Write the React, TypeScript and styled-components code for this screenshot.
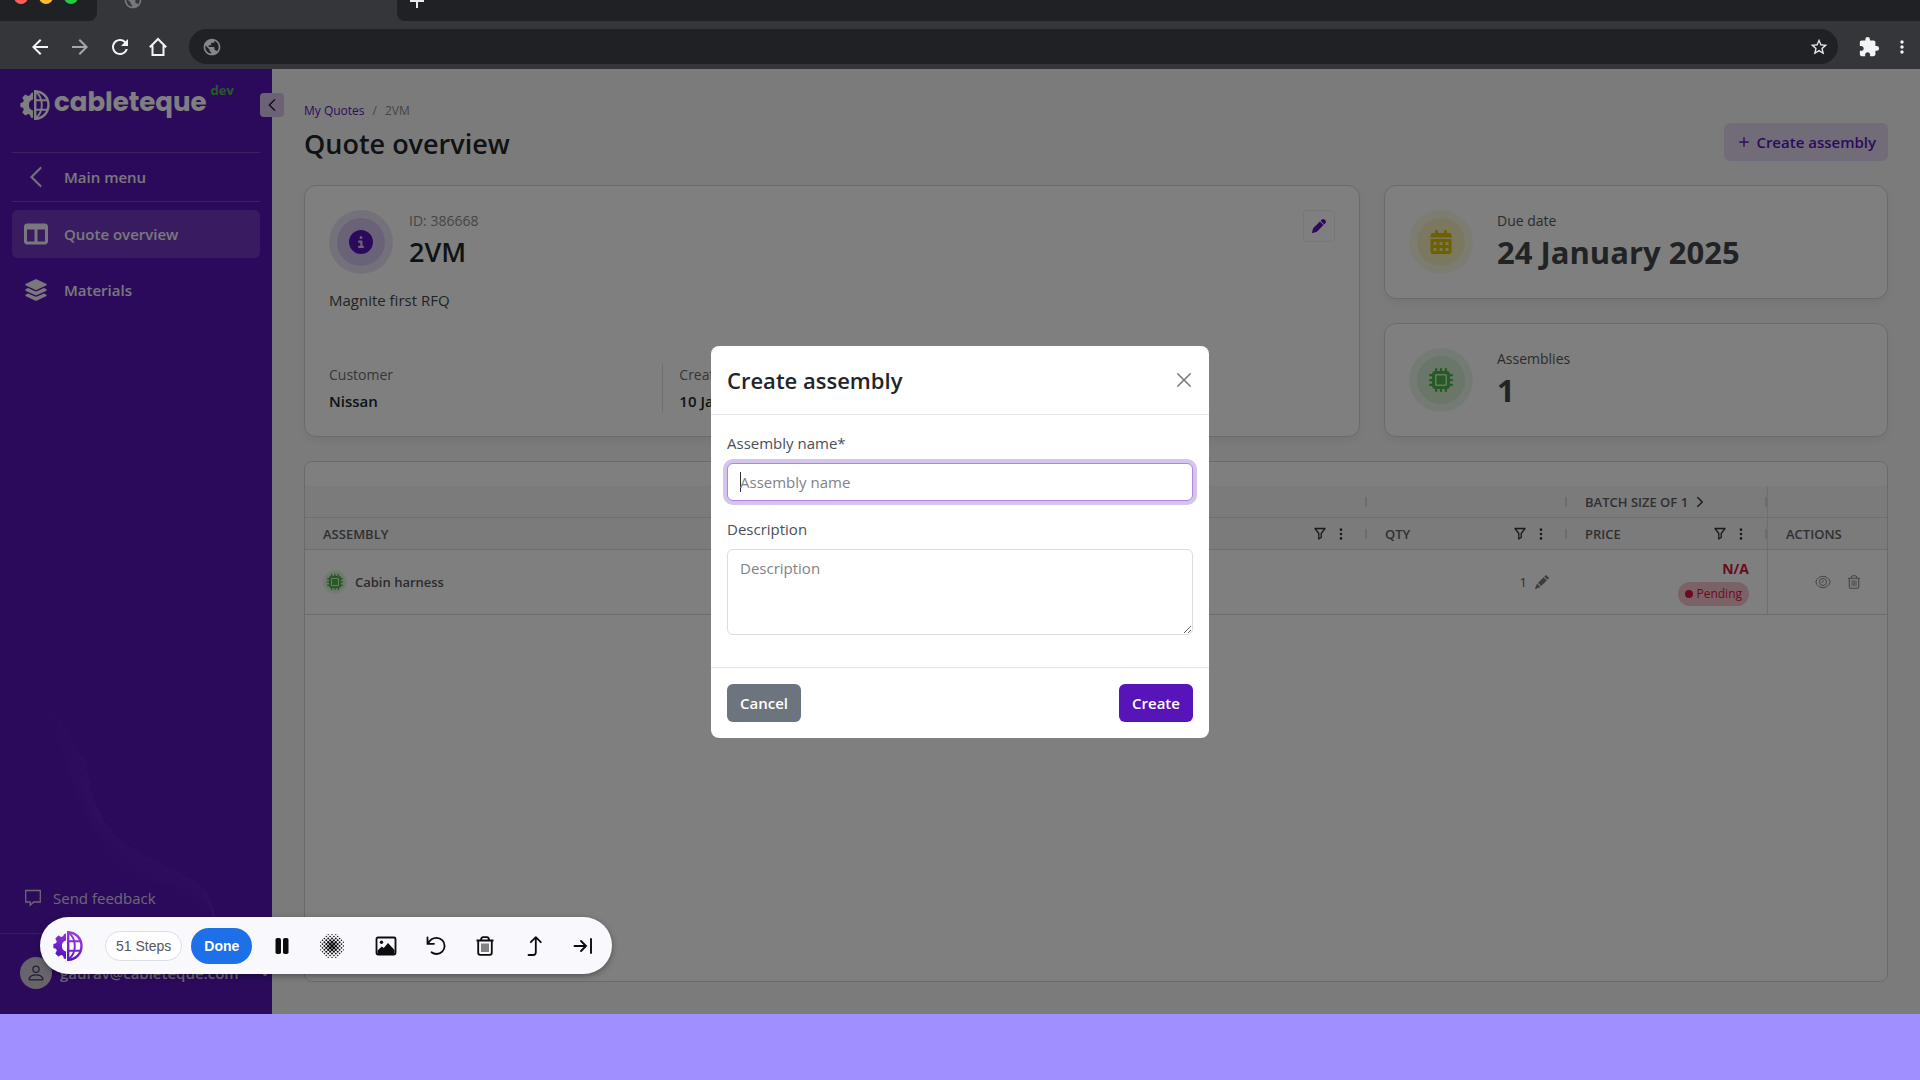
import React from "react";
import styled, { createGlobalStyle, css } from "styled-components";
import { MdArrowBack, MdArrowForward, MdRefresh, MdPublic, MdStarOutline, MdExtension, MdMoreVert, MdAdd } from "react-icons/md";
import { BsChevronLeft, BsChevronRight, BsChevronDown, BsPerson, BsPencilFill, BsXLg, BsThreeDotsVertical } from "react-icons/bs";
import { FaCircleInfo, FaTableColumns, FaLayerGroup, FaMicrochip, FaPen } from "react-icons/fa6";
import { FaCalendarAlt } from "react-icons/fa";

const color = {
  chromeDark: "#202124",
  chrome: "#35363a",
  purple: "#5715b9",
  purpleSoft: "#e2d9ef",
  page: "#f7f7f7",
  line: "#dfdfe3",
  text: "#212529",
  body: "#495057",
  muted: "#8a8a8e",
  green: "#4cb748",
  yellow: "#dcc400",
  red: "#d4143c",
};

const font = `"Segoe UI", "Open Sans", "Noto Sans", sans-serif`;

const GlobalStyle = createGlobalStyle`
  *, *::before, *::after { box-sizing: border-box; }
  body { margin: 0; font-family: ${font}; font-size: 15px; color: ${color.text}; }
  button, input, textarea { font-family: inherit; font-size: inherit; color: inherit; margin: 0; }
  button { border: 0; padding: 0; background: none; cursor: pointer; }
  h1, h2, p, dl, dd, ul { margin: 0; padding: 0; }
  svg { display: block; flex: none; }
  a { text-decoration: none; }
`;

const Screen = styled.div`
  display: flex;
  flex-direction: column;
  height: 100vh;
  background: #a08fff;
`;

/* ---------- browser chrome ---------- */

const TabStrip = styled.div`
  display: flex;
  flex: none;
  height: 21px;
  background: ${color.chrome};
  overflow: hidden;
`;

const StripZone = styled.div<{ $side?: "left" | "right" }>`
  display: flex;
  align-items: center;
  align-self: flex-end;
  flex: none;
  height: 42px;
  ${(p) =>
    p.$side === "left" &&
    css`
      width: 97px;
      padding: 0 0 6px 14px;
      gap: 11px;
      background: ${color.chromeDark};
      border-bottom-right-radius: 8px;
    `}
  ${(p) =>
    p.$side === "right" &&
    css`
      flex: 1;
      padding: 2px 0 0 8px;
      color: #e8eaed;
      background: ${color.chromeDark};
      border-bottom-left-radius: 8px;
    `}
  ${(p) =>
    !p.$side &&
    css`
      width: 300px;
      padding-left: 26px;
      color: #75777b;
    `}
`;

const Light = styled.span<{ $tone: string }>`
  width: 14px;
  height: 14px;
  border-radius: 50%;
  background: ${(p) => p.$tone};
`;

const AddressBar = styled.div`
  display: flex;
  align-items: center;
  height: 48px;
  flex: none;
  padding: 3px 8px 0 28px;
  background: ${color.chrome};
`;

const ChromeButton = styled.button<{ $dim?: boolean }>`
  display: grid;
  place-items: center;
  width: 20px;
  height: 36px;
  margin-right: 20px;
  color: ${(p) => (p.$dim ? "#a5a7ab" : "#f1f3f4")};
`;

const Omnibox = styled.div`
  flex: 1;
  display: flex;
  align-items: center;
  justify-content: space-between;
  height: 35px;
  margin: 0 20px 0 1px;
  padding: 0 9px 0 13px;
  border-radius: 18px;
  background: ${color.chromeDark};
  color: #85878b;
`;

const ChromeActions = styled.div`
  display: flex;
  align-items: center;
  gap: 12px;
  color: #f1f3f4;
`;

const PlainButton = styled.button`
  display: grid;
  place-items: center;
  color: inherit;
`;

/* ---------- application shell ---------- */

const Viewport = styled.div`
  position: relative;
  flex: 1;
  display: flex;
  min-height: 0;
  margin-bottom: 66px;
  background: ${color.page};
`;

const Sidebar = styled.aside`
  position: relative;
  display: flex;
  flex-direction: column;
  flex: none;
  width: 272px;
  background: ${color.purple};
  color: #f4f0fa;
`;

const Mesh = styled.svg`
  position: absolute;
  left: 0;
  bottom: 0;
  opacity: 0.12;
`;

const Brand = styled.div`
  display: flex;
  height: 83px;
  padding: 20px 0 0 20px;
  color: #fff;
`;

const BrandName = styled.span`
  margin-left: 4px;
  font-family: Poppins, Inter, sans-serif;
  font-size: 26px;
  line-height: 26px;
  font-weight: 700;
`;

const EnvTag = styled.span`
  margin-left: 4px;
  font-size: 13px;
  line-height: 2px;
  font-weight: 700;
  color: ${color.green};
`;

const CollapseButton = styled.button`
  position: absolute;
  top: 24px;
  right: -12px;
  display: grid;
  place-items: center;
  width: 24px;
  height: 24px;
  border-radius: 4px;
  background: #d6c5ec;
  color: ${color.text};
`;

const Nav = styled.nav`
  position: relative;
  display: flex;
  flex-direction: column;
  gap: 8px;
  margin: 0 12px;
`;

const NavLink = styled.a<{ $active?: boolean; $ruled?: boolean }>`
  display: flex;
  align-items: center;
  gap: 16px;
  height: ${(p) => (p.$ruled ? "50px" : "48px")};
  padding: 0 12px;
  border-radius: ${(p) => (p.$ruled ? "0" : "6px")};
  color: inherit;
  font-weight: 600;
  background: ${(p) => (p.$active ? "rgba(255, 255, 255, 0.15)" : "transparent")};
  ${(p) =>
    p.$ruled &&
    css`
      border: solid rgba(255, 255, 255, 0.2);
      border-width: 1px 0;
    `}
`;

const SidebarFoot = styled.div`
  position: relative;
  margin-top: auto;
`;

const Feedback = styled.a`
  display: flex;
  align-items: center;
  gap: 12px;
  height: 68px;
  padding: 0 0 4px 25px;
  border-bottom: 1px solid rgba(255, 255, 255, 0.15);
  color: #d9d0e6;
`;

const Profile = styled.button`
  display: flex;
  align-items: center;
  gap: 8px;
  width: 100%;
  height: 80px;
  padding: 0 0 2px 20px;
  color: #d9d0e6;
  font-weight: 600;

  > svg { margin-left: auto; }
`;

const Avatar = styled.span`
  display: grid;
  place-items: center;
  width: 32px;
  height: 32px;
  border-radius: 50%;
  background: #d0c9d8;
  color: #4a3a66;
`;

const Main = styled.main`
  flex: 1;
  display: flex;
  flex-direction: column;
  gap: 24px;
  min-width: 0;
  padding: 32px;
`;

const PageHeader = styled.header`
  display: flex;
  align-items: flex-end;
  justify-content: space-between;
`;

const Crumbs = styled.nav`
  display: flex;
  gap: 8px;
  margin-bottom: 6px;
  font-size: 12px;
  line-height: 20px;
  color: ${color.muted};

  a { color: ${color.purple}; }
`;

const Title = styled.h1`
  font-size: 27px;
  line-height: 34px;
  font-weight: 600;
`;

const Button = styled.button<{ $tone: "soft" | "grey" | "primary" }>`
  display: flex;
  align-items: center;
  justify-content: center;
  gap: 4px;
  min-width: 74px;
  height: 38px;
  padding: 0 12px;
  border-radius: 6px;
  font-weight: 600;
  background: ${(p) => ({ soft: color.purpleSoft, grey: "#6c757d", primary: color.purple })[p.$tone]};
  color: ${(p) => (p.$tone === "soft" ? color.purple : "#fff")};
`;

const Summary = styled.section`
  display: grid;
  grid-template-columns: 44fr 21fr;
  gap: 24px;
`;

const Card = styled.div`
  display: flex;
  flex-direction: column;
  padding: 24px;
  border: 1px solid #d4d4d8;
  border-radius: 12px;
  background: #fff;
  box-shadow: 0 4px 8px rgba(0, 0, 0, 0.06);
`;

const Stack = styled.div`
  display: grid;
  gap: 24px;
`;

const CardTop = styled.div<{ $gap: number }>`
  display: flex;
  align-items: center;
  gap: ${(p) => p.$gap}px;
`;

const CardHeading = styled.div`
  padding-bottom: 4px;
`;

const Halo = styled.span<{ $tint: string; $color: string; $small?: boolean }>`
  display: grid;
  place-items: center;
  flex: none;
  width: ${(p) => (p.$small ? 24 : 64)}px;
  height: ${(p) => (p.$small ? 24 : 64)}px;
  border: ${(p) => (p.$small ? 2 : 8)}px solid rgba(${(p) => p.$tint}, 0.12);
  border-radius: 50%;
  background: rgba(${(p) => p.$tint}, ${(p) => (p.$small ? 0.2 : 0.25)});
  background-clip: padding-box;
  color: ${(p) => p.$color};
`;

const Label = styled.div<{ $muted?: boolean }>`
  font-size: 14px;
  line-height: 20px;
  color: ${(p) => (p.$muted ? color.muted : "#55585c")};
`;

const QuoteName = styled.h2`
  margin-top: 4px;
  font-size: 27px;
  line-height: 34px;
  font-weight: 600;
`;

const Figure = styled.div`
  margin-top: 4px;
  font-size: 31px;
  line-height: 34px;
  font-weight: 700;
  color: #44464a;
`;

const EditButton = styled.button`
  display: grid;
  place-items: center;
  align-self: flex-start;
  width: 32px;
  height: 32px;
  margin-left: auto;
  border: 1px solid #ececf0;
  border-radius: 4px;
  color: ${color.purple};
`;

const Note = styled.p`
  margin-top: 16px;
  line-height: 20px;
  color: #44474b;
`;

const Facts = styled.dl`
  display: grid;
  grid-template-columns: repeat(3, 1fr);
  margin-top: auto;
  padding-right: 6px;
`;

const Fact = styled.div`
  line-height: 22px;

  & + & {
    padding-left: 16px;
    border-left: 1px solid ${color.line};
  }
  dt { margin-bottom: 4px; font-size: 14px; color: #6c6e72; }
  dd { font-weight: 600; font-size: 15px; }
`;

/* ---------- assemblies table ---------- */

const TableCard = styled.section`
  flex: 1;
  min-height: 0;
  padding-top: 24px;
  border: 1px solid #d4d4d8;
  border-radius: 8px;
  background: #fff;
`;

const Table = styled.table`
  width: 100%;
  table-layout: fixed;
  border-collapse: separate;
  border-spacing: 0;

  tr > :last-child { border-left: 1px solid ${color.line}; }
`;

const Col = styled.col<{ $width?: number }>`
  width: ${(p) => (p.$width ? `${p.$width}px` : "auto")};
`;

const Th = styled.th`
  height: 32px;
  padding: 0 0 0 18px;
  border-bottom: 1px solid ${color.line};
  background: #f6f6f7;
  font-size: 13px;
  font-weight: 600;
  text-align: left;
  white-space: nowrap;
  color: #5f6165;
`;

const HeadCell = styled.div<{ $tick?: boolean }>`
  display: flex;
  align-items: center;
  gap: 6px;
  height: 10px;
  border-right: ${(p) => (p.$tick ? "2px solid #d6d6e0" : "0")};
`;

const HeadTools = styled.span`
  display: flex;
  align-items: center;
  gap: 8px;
  margin-left: auto;
  margin-right: 17px;
  color: #333;
`;

const Td = styled.td<{ $pad?: number }>`
  height: 65px;
  padding: 0 ${(p) => p.$pad ?? 18}px 0 18px;
  border-bottom: 1px solid #d9d9e4;
`;

const Cell = styled.div<{ $end?: boolean; $gap?: number; $faint?: boolean }>`
  display: flex;
  align-items: center;
  justify-content: ${(p) => (p.$end ? "flex-end" : "flex-start")};
  gap: ${(p) => p.$gap ?? 8}px;
  font-size: 13px;
  font-weight: ${(p) => (p.$end ? 400 : 600)};
  color: ${(p) => (p.$faint ? "#85878b" : "#55585c")};
`;

const Price = styled.div`
  display: flex;
  flex-direction: column;
  align-items: flex-end;
  gap: 2px;
  font-size: 14px;
  line-height: 22px;
  font-weight: 700;
  color: ${color.red};
`;

const Pill = styled.span`
  display: flex;
  align-items: center;
  gap: 3px;
  height: 24px;
  padding: 0 7px;
  border-radius: 12px;
  background: #f6c4cf;
  font-size: 12px;
  font-weight: 400;

  &::before {
    content: "";
    width: 8px;
    height: 8px;
    border-radius: 50%;
    background: ${color.red};
  }
`;

/* ---------- dialog ---------- */

const Backdrop = styled.div`
  position: absolute;
  inset: 0;
  display: flex;
  align-items: center;
  justify-content: center;
  background: rgba(0, 0, 0, 0.5);
`;

const Dialog = styled.form`
  width: 498px;
  border-radius: 8px;
  background: #fff;
`;

const DialogHeader = styled.header`
  display: flex;
  align-items: center;
  justify-content: space-between;
  padding: 16px;
  border-bottom: 1px solid #e6e6ea;

  h2 { font-size: 22px; line-height: 36px; font-weight: 600; }
`;

const DialogBody = styled.div`
  display: flex;
  flex-direction: column;
  padding: 16px 16px 32px;
`;

const FieldLabel = styled.label`
  margin-bottom: 8px;
  line-height: 24px;
  color: ${color.body};
`;

const control = css`
  display: block;
  width: 100%;
  padding: 6px 12px;
  border: 1px solid #dcdde1;
  border-radius: 6px;
  outline: none;
  line-height: 24px;
  &::placeholder { color: #7f8286; opacity: 1; }
`;

/* The focused field shows a resting text caret before its placeholder. */
const NameInput = styled.input`
  ${control}
  height: 38px;
  margin-bottom: 16px;
  border-color: #ab8adc;
  box-shadow: 0 0 0 4px rgba(87, 21, 185, 0.25);
  background: linear-gradient(#333, #333) 12px center / 1px 20px no-repeat #fff;
`;

const DescriptionInput = styled.textarea`
  ${control}
  height: 86px;
  resize: vertical;
`;

const DialogFooter = styled.footer`
  display: flex;
  justify-content: space-between;
  padding: 16px;
  border-top: 1px solid #e6e6ea;
`;

/* ---------- recorder bar ---------- */

const Recorder = styled.div`
  position: absolute;
  left: 40px;
  bottom: 40px;
  display: flex;
  align-items: center;
  height: 57px;
  padding: 0 19px 0 13px;
  border-radius: 29px;
  background: #f9f9fd;
  box-shadow: 0 2px 6px rgba(0, 0, 0, 0.35);
  color: #0c0c0e;
  font-family: Arial, "Liberation Sans", sans-serif;
`;

const Steps = styled.span`
  height: 30px;
  margin: 0 9px 0 22px;
  padding: 0 10px;
  border: 1px solid #dddde4;
  border-radius: 15px;
  background: #fff;
  font-size: 14px;
  line-height: 28px;
  color: #55565f;
`;

const Done = styled.button`
  height: 36px;
  margin-right: 23px;
  padding: 0 13px;
  border-radius: 18px;
  background: #1d70e8;
  color: #fff;
  font-size: 14px;
  font-weight: 700;
`;

const Tools = styled.div`
  display: flex;
  align-items: center;
  gap: 29px;
`;

/* ---------- drawings ---------- */

const Logo = ({ gradient }: { gradient?: boolean }) => {
  const paint = gradient ? "url(#brandFade)" : "currentColor";
  return (
    <svg width="30" height="32" viewBox="0 0 30 32">
      {gradient && (
        <defs>
          <linearGradient id="brandFade" gradientUnits="userSpaceOnUse" x1="22" y1="0" x2="8" y2="32">
            <stop offset="0" stopColor="#a03ee0" />
            <stop offset="1" stopColor="#4a10b4" />
          </linearGradient>
        </defs>
      )}
      <path
        fill={paint}
        d="M13 3.200V10.600a5.600 5.600 0 0 0 0 10.800v7.400h-2l-1-3-1.800-.8-2.900 1.500-3-3 1.500-2.900-.8-1.800-2.600-.8v-4l2.600-.8.8-1.800-1.500-2.900 3-3 2.900 1.500 1.800-.8 1-2z"
      />
      <g fill="none" stroke={paint}>
        <path strokeWidth="2.400" d="M15.200 2.200V29.800C23 29.500 28.500 23.500 28.500 16S23 2.500 15.200 2.200Z" />
        <path strokeWidth="1.900" d="M15.500 2.800C20 6 21.800 11 21.800 16S20 26 15.500 29.200M15 11.300H27.500M15 20.700H27.500" />
      </g>
    </svg>
  );
};

const HomeIcon = () => (
  <svg width="20" height="20" viewBox="0 0 20 20" fill="none" stroke="currentColor" strokeWidth="2">
    <path d="M1.800 10.200L10 2l8.200 8.200M4.500 8.500V18h11V8.500" />
  </svg>
);

const ChatIcon = () => (
  <svg width="16" height="18" viewBox="0 0 16 18" fill="none" stroke="currentColor" strokeWidth="1.300">
    <path d="M.7 1.500h14.600v11.500H8.800L5.200 16.300V13H.7z" />
  </svg>
);

const FunnelIcon = () => (
  <svg width="12" height="13" viewBox="0 0 12 13" fill="none" stroke="currentColor" strokeWidth="1.300">
    <path d="M1 1.500h10L7.200 6.500v4L4.800 12V6.500z" strokeLinejoin="round" />
  </svg>
);

const EyeIcon = () => (
  <svg width="16" height="14" viewBox="0 0 16 14" fill="none" stroke="currentColor" strokeWidth="1">
    <path d="M.8 7C3-.6 13-.6 15.200 7 13 14.600 3 14.600.8 7z" />
    <circle cx="8" cy="7" r="3.500" />
    <path d="M6.600 7.500A1.500 1.500 0 0 0 8 5.200" />
  </svg>
);

const BinIcon = ({ size, stroke }: { size: number; stroke: number }) => (
  <svg width={size} height={size} viewBox="0 0 20 20" fill="none" stroke="currentColor" strokeWidth={stroke}>
    <path d="M1.500 4.500h17M6 4.200C6 2 7 1.200 8.200 1.200h3.600C13 1.200 14 2 14 4.200M3.200 4.500v12.300c0 1.300.7 2 2 2h9.600c1.300 0 2-.7 2-2V4.500" />
    <path d="M7 7.500v8.500M9 7.500v8.500M11 7.500v8.500M13 7.500v8.500" strokeWidth="1" />
  </svg>
);

const PauseIcon = () => (
  <svg width="14" height="16" viewBox="0 0 14 16" fill="currentColor">
    <rect x=".5" width="5.500" height="16" rx="1.800" />
    <rect x="8" width="5.500" height="16" rx="1.800" />
  </svg>
);

/* Halftone disc: dots shrink with distance from the centre. */
const BlurIcon = () => {
  const dots: React.ReactNode[] = [];
  for (let row = -6; row <= 6; row++) {
    for (let col = -6; col <= 6; col++) {
      const far = Math.hypot(row, col);
      if ((row + col) % 2 || far > 6.600) continue;
      dots.push(<circle key={`${row}:${col}`} cx={14 + col * 1.900} cy={14 + row * 1.900} r={1.650 - far * 0.160} />);
    }
  }
  return (
    <svg width="28" height="28" viewBox="0 0 28 28" fill="currentColor">
      {dots}
    </svg>
  );
};

const PictureIcon = () => (
  <svg width="22" height="20" viewBox="0 0 22 20">
    <rect x="1.500" y="1.500" width="19" height="17" rx="1.500" fill="none" stroke="currentColor" strokeWidth="1.800" />
    <circle cx="6.500" cy="6.300" r="1.700" fill="currentColor" />
    <path fill="currentColor" d="M2.500 18v-3.500l4.300-4 2 1.500 4.200-5 6.500 7V18z" />
  </svg>
);

const UndoIcon = () => (
  <svg width="20" height="20" viewBox="0 0 20 20" fill="none" stroke="currentColor" strokeWidth="1.800" strokeLinecap="round">
    <path d="M1.500 1.500v6.300H8M2 7.500C4 3.500 7 1.800 10.500 1.800a8 8 0 0 1 0 16.200c-2 0-3.700-.6-5-1.700" />
  </svg>
);

const TurnUpIcon = () => (
  <svg width="20" height="20" viewBox="-2 0 20 20" fill="none" stroke="currentColor" strokeWidth="1.800" strokeLinecap="round" strokeLinejoin="round">
    <path d="M2.500 19H7c1.800 0 2.800-1 2.800-2.800V1.200M4.800 6.200l5-5 5 5" />
  </svg>
);

const DockIcon = () => (
  <svg width="20" height="16" viewBox="0 0 20 16" fill="none" stroke="currentColor" strokeWidth="1.900" strokeLinecap="round">
    <path d="M1.500 8h11.500M8 3l5 5-5 5M18 1v14" />
  </svg>
);

const SidebarMesh = () => {
  const strands = Array.from({ length: 22 }, (_, i) => i);
  return (
    <Mesh width="272" height="460" viewBox="0 0 272 460" fill="none" stroke="#e6c8ff" aria-hidden="true">
      {strands.map((i) => (
        <path
          key={`b${i}`}
          strokeWidth="0.500"
          strokeOpacity="0.350"
          d={`M${-40 + i * 3} ${330 + i * 4}Q${30 + i * 4} ${290 + i * 2} ${90 + i * 5} ${190 + i * 6}`}
        />
      ))}
      {strands.slice(0, 9).map((i) => (
        <path
          key={`a${i}`}
          strokeWidth="1"
          strokeOpacity={0.600 - i * 0.060}
          d={`M${84 - i * 5} ${205 - i * 8}C${94 - i} ${270 + i} ${112 - i} ${288 + i * 2} ${160 - i * 3} ${311 + i}S${204 + i * 2} ${328 + i * 2} ${214 + i * 2} ${362 + i * 6}`}
        />
      ))}
    </Mesh>
  );
};

const Tooling = () => (
  <HeadTools>
    <PlainButton type="button" aria-label="Filter"><FunnelIcon /></PlainButton>
    <PlainButton type="button" aria-label="Column menu"><BsThreeDotsVertical size={14} /></PlainButton>
  </HeadTools>
);

export default function App() {
  return (
    <Screen>
      <GlobalStyle />
      <TabStrip>
        <StripZone $side="left">
          <Light $tone="#ff5f57" />
          <Light $tone="#febc2e" />
          <Light $tone="#28c840" />
        </StripZone>
        <StripZone><MdPublic size={20} /></StripZone>
        <StripZone $side="right">
          <PlainButton aria-label="New tab"><MdAdd size={24} /></PlainButton>
        </StripZone>
      </TabStrip>
      <AddressBar>
        <ChromeButton aria-label="Back"><MdArrowBack size={24} /></ChromeButton>
        <ChromeButton aria-label="Forward" $dim><MdArrowForward size={24} /></ChromeButton>
        <ChromeButton aria-label="Reload"><MdRefresh size={24} /></ChromeButton>
        <ChromeButton aria-label="Home"><HomeIcon /></ChromeButton>
        <Omnibox>
          <MdPublic size={20} />
          <MdStarOutline size={20} color="#e8eaed" />
        </Omnibox>
        <ChromeActions>
          <PlainButton aria-label="Extensions"><MdExtension size={22} /></PlainButton>
          <PlainButton aria-label="Menu"><MdMoreVert size={20} /></PlainButton>
        </ChromeActions>
      </AddressBar>

      <Viewport>
        <Sidebar>
          <SidebarMesh />
          <Brand>
            <Logo />
            <BrandName>cableteque</BrandName>
            <EnvTag>dev</EnvTag>
          </Brand>
          <Nav>
            <NavLink href="#menu" $ruled><BsChevronLeft size={24} strokeWidth={0.5} />Main menu</NavLink>
            <NavLink href="#overview" $active><FaTableColumns size={24} />Quote overview</NavLink>
            <NavLink href="#materials"><FaLayerGroup size={24} />Materials</NavLink>
          </Nav>
          <SidebarFoot>
            <Feedback href="#feedback"><ChatIcon />Send feedback</Feedback>
            <Profile type="button">
              <Avatar><BsPerson size={20} /></Avatar>
              gaurav@cableteque.com
              <BsChevronDown size={14} strokeWidth={1} />
            </Profile>
          </SidebarFoot>
          <CollapseButton aria-label="Collapse sidebar"><BsChevronLeft size={14} strokeWidth={1} /></CollapseButton>
        </Sidebar>

        <Main>
          <PageHeader>
            <div>
              <Crumbs aria-label="Breadcrumb">
                <a href="#quotes">My Quotes</a>
                <span>/</span>
                <span>2VM</span>
              </Crumbs>
              <Title>Quote overview</Title>
            </div>
            <Button type="button" $tone="soft"><MdAdd size={16} />Create assembly</Button>
          </PageHeader>

          <Summary>
            <Card>
              <CardTop $gap={16}>
                <Halo $tint="87, 21, 185" $color={color.purple}><FaCircleInfo size={24} /></Halo>
                <CardHeading>
                  <Label $muted>ID: 386668</Label>
                  <QuoteName>2VM</QuoteName>
                </CardHeading>
                <EditButton aria-label="Edit quote"><FaPen size={14} /></EditButton>
              </CardTop>
              <Note>Magnite first RFQ</Note>
              <Facts>
                <Fact><dt>Customer</dt><dd>Nissan</dd></Fact>
                <Fact><dt>Created</dt><dd>10 January 2025</dd></Fact>
              </Facts>
            </Card>
            <Stack>
              <Card>
                <CardTop $gap={24}>
                  <Halo $tint="225, 200, 0" $color={color.yellow}><FaCalendarAlt size={24} /></Halo>
                  <CardHeading>
                    <Label>Due date</Label>
                    <Figure>24 January 2025</Figure>
                  </CardHeading>
                </CardTop>
              </Card>
              <Card>
                <CardTop $gap={24}>
                  <Halo $tint="76, 183, 72" $color={color.green}><FaMicrochip size={24} /></Halo>
                  <CardHeading>
                    <Label>Assemblies</Label>
                    <Figure>1</Figure>
                  </CardHeading>
                </CardTop>
              </Card>
            </Stack>
          </Summary>

          <TableCard>
            <Table>
              <colgroup>
                <Col />
                <Col $width={200} />
                <Col $width={200} />
                <Col $width={120} />
              </colgroup>
              <thead>
                <tr>
                  <Th><HeadCell $tick /></Th>
                  <Th><HeadCell $tick /></Th>
                  <Th><HeadCell $tick>BATCH SIZE OF 1 <BsChevronRight size={12} color="#222" strokeWidth={1} /></HeadCell></Th>
                  <Th />
                </tr>
                <tr>
                  <Th scope="col"><HeadCell $tick>ASSEMBLY<Tooling /></HeadCell></Th>
                  <Th scope="col"><HeadCell $tick>QTY<Tooling /></HeadCell></Th>
                  <Th scope="col"><HeadCell $tick>PRICE<Tooling /></HeadCell></Th>
                  <Th scope="col"><HeadCell>ACTIONS</HeadCell></Th>
                </tr>
              </thead>
              <tbody>
                <tr>
                  <Td>
                    <Cell>
                      <Halo $small $tint="76, 183, 72" $color={color.green}><FaMicrochip size={16} /></Halo>
                      Cabin harness
                    </Cell>
                  </Td>
                  <Td>
                    <Cell $end>1<PlainButton aria-label="Edit quantity"><BsPencilFill size={14} color="#77797d" /></PlainButton></Cell>
                  </Td>
                  <Td><Price>N/A<Pill>Pending</Pill></Price></Td>
                  <Td $pad={26}>
                    <Cell $end $faint $gap={16}>
                      <PlainButton aria-label="View"><EyeIcon /></PlainButton>
                      <PlainButton aria-label="Delete"><BinIcon size={14} stroke={1.500} /></PlainButton>
                    </Cell>
                  </Td>
                </tr>
              </tbody>
            </Table>
          </TableCard>
        </Main>

        <Backdrop>
          <Dialog role="dialog" aria-labelledby="dialog-title" onSubmit={(e) => e.preventDefault()}>
            <DialogHeader>
              <h2 id="dialog-title">Create assembly</h2>
              <PlainButton type="button" aria-label="Close"><BsXLg size={18} color="#77797b" strokeWidth={0.5} /></PlainButton>
            </DialogHeader>
            <DialogBody>
              <FieldLabel htmlFor="assembly-name">Assembly name*</FieldLabel>
              <NameInput id="assembly-name" type="text" placeholder="Assembly name" />
              <FieldLabel htmlFor="assembly-description">Description</FieldLabel>
              <DescriptionInput id="assembly-description" placeholder="Description" />
            </DialogBody>
            <DialogFooter>
              <Button type="button" $tone="grey">Cancel</Button>
              <Button type="submit" $tone="primary">Create</Button>
            </DialogFooter>
          </Dialog>
        </Backdrop>

        <Recorder>
          <Logo gradient />
          <Steps>51 Steps</Steps>
          <Done type="button">Done</Done>
          <Tools>
            <PlainButton aria-label="Pause"><PauseIcon /></PlainButton>
            <PlainButton aria-label="Blur"><BlurIcon /></PlainButton>
            <PlainButton aria-label="Screenshot"><PictureIcon /></PlainButton>
            <PlainButton aria-label="Undo"><UndoIcon /></PlainButton>
            <PlainButton aria-label="Delete"><BinIcon size={20} stroke={1.800} /></PlainButton>
            <PlainButton aria-label="Move up"><TurnUpIcon /></PlainButton>
            <PlainButton aria-label="Dock"><DockIcon /></PlainButton>
          </Tools>
        </Recorder>
      </Viewport>
    </Screen>
  );
}
